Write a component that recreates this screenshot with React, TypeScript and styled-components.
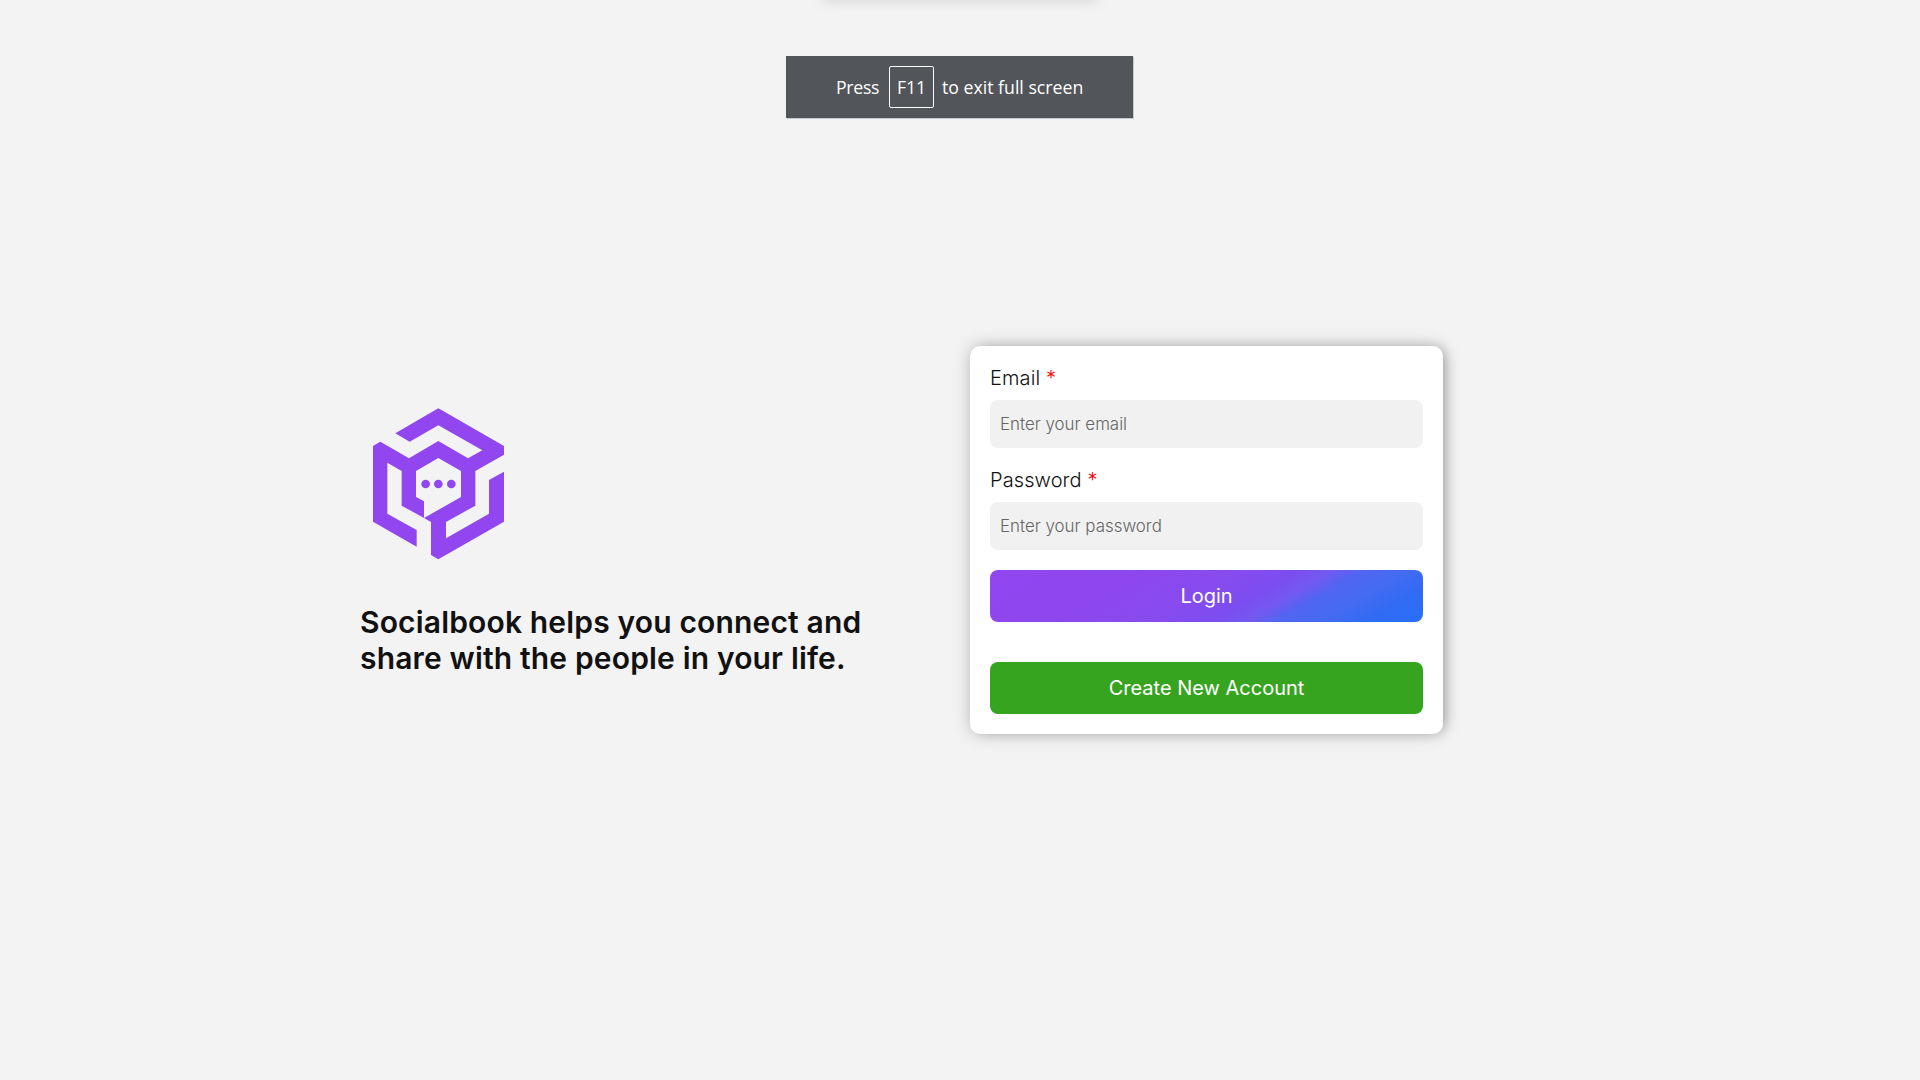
import React from "react";
import styled, { createGlobalStyle } from "styled-components";

const Global = createGlobalStyle`
  * { box-sizing: border-box; }
  body { margin: 0; background: #f3f3f3; color: #111; font-family: Inter, sans-serif; overflow: hidden; }
`;

const Page = styled.main`
  position: relative;
  height: 1080px;
  display: grid;
  grid-template-columns: 560px 473px;
  column-gap: 50px;
  padding: 346px 0 0 360px;
  align-items: start;
`;

const TopShadow = styled.div`
  position: absolute;
  top: -20px;
  left: 824px;
  width: 272px;
  height: 18px;
  box-shadow: 0 1px 14px 2px rgba(0, 0, 0, 0.12);
`;

const Notice = styled.div`
  position: absolute;
  top: 56px;
  left: 786px;
  width: 347px;
  height: 62px;
  display: flex;
  align-items: center;
  padding-left: 50px;
  background: #525559;
  color: #fff;
  font: 17.7px/24px "Open Sans", sans-serif;
  box-shadow: 1px 1px 0 #c6c8cf;
  white-space: nowrap;
`;

const Word = styled.span<{ $width: number; $tracking?: number }>`
  width: ${(p) => p.$width}px;
  letter-spacing: ${(p) => p.$tracking ?? 0}px;
`;

const Key = styled.kbd`
  width: 45px;
  height: 42px;
  margin: 0 8px 0 10px;
  display: grid;
  place-items: center;
  border: 1px solid #fff;
  border-radius: 2px;
  font: inherit;
  letter-spacing: -0.2px;
`;

const Brand = styled.section`
  padding-top: 62px;
`;

const Logo = styled.svg`
  display: block;
  width: 180px;
  height: 190px;
  margin: -18px 0 24px -10px;
`;

const Tagline = styled.h1`
  margin: 0;
  font-size: 30px;
  line-height: 36px;
  font-weight: 600;
  letter-spacing: 0.16px;
  color: #111;
  white-space: nowrap;
`;

const Card = styled.form`
  height: 388px;
  padding: 20px;
  display: flex;
  flex-direction: column;
  background: #fff;
  border-radius: 10px;
  box-shadow: 5px 0 14px -5px rgba(0, 0, 0, 0.3), 0 0 18px rgba(0, 0, 0, 0.22);
`;

const Field = styled.label`
  display: block;
  height: 82px;
  margin-bottom: 20px;
  font-size: 20px;
  line-height: 24px;
  font-weight: 300;
  letter-spacing: 0.1px;
`;

const Required = styled.span`
  color: #f00;
`;

const Input = styled.input`
  display: block;
  width: 100%;
  height: 48px;
  margin-top: 10px;
  padding: 0 10px;
  border: 0;
  border-radius: 8px;
  background: #f1f1f1;
  font: 300 16.9px Inter, sans-serif;
  &::placeholder { color: #666; }
`;

const Button = styled.button<{ $fill: string; $gap?: number }>`
  height: 52px;
  margin: 0 0 ${(p) => p.$gap ?? 0}px;
  padding: 0;
  flex: none;
  border: 0;
  border-radius: 8px;
  background: ${(p) => p.$fill};
  color: #fff;
  font: 400 20px Inter, sans-serif;
`;

const loginFill =
  "linear-gradient(149deg, #9146f0 0%, #8e46ee 28%, #874bee 47%, #7c4df0 59%, #7359f0 66%, #5165f1 71.5%, #456bf2 80%, #316bf4 89%, #286ff5 100%)";

export default function App() {
  return (
    <>
      <Global />
      <Page>
        <TopShadow />
        <Notice>
          <Word $width={43} $tracking={-0.3}>Press</Word>
          <Key>F11</Key>
          <Word $width={150}>to exit full screen</Word>
        </Notice>
        <Brand>
          <Logo viewBox="0 0 540 570" fill="#9146f0">
            <path d="M136 130 265 55 462 168V194L376 243V347L288 396V445L417 371V270L462 245V395L265 508 243 495V396L222 384 333 321V243L265 204 198 243V321L222 334V384L155 347V243L112 218V371L200 420V470L69 395V168L91 155 177 205 265 153 354 205 397 181 265 106 179 155Z" />
            <circle cx="227" cy="282" r="13" />
            <circle cx="265" cy="282" r="13" />
            <circle cx="304" cy="282" r="13" />
          </Logo>
          <Tagline>
            Socialbook helps you connect and
            <br />
            share with the people in your life.
          </Tagline>
        </Brand>
        <Card onSubmit={(e) => e.preventDefault()}>
          <Field>
            Email <Required>*</Required>
            <Input type="email" placeholder="Enter your email" />
          </Field>
          <Field>
            Password <Required>*</Required>
            <Input type="password" placeholder="Enter your password" />
          </Field>
          <Button $fill={loginFill} $gap={40}>Login</Button>
          <Button $fill="#37a420" type="button">Create New Account</Button>
        </Card>
      </Page>
    </>
  );
}
